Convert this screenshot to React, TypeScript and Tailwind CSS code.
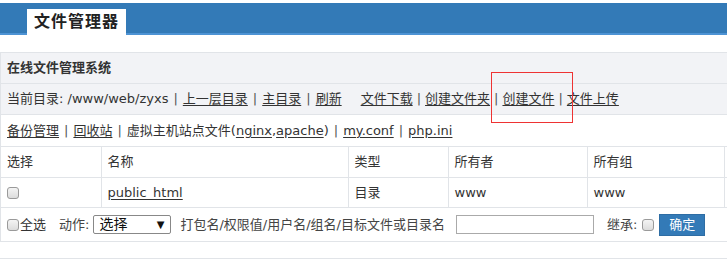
import React from 'react';

const font = { fontFamily: '"DejaVu Sans", "Noto Sans CJK SC", sans-serif' };

function Box({ className = '' }: { className?: string }) {
  return (
    <span
      className={`inline-block w-[12px] h-[12px] rounded-[3px] border border-[#9a9a9a] bg-gradient-to-b from-[#f4f4f4] to-[#dcdcdc] align-middle ${className}`}
    />
  );
}

function Sep({ tight = false }: { tight?: boolean }) {
  return <span className={`${tight ? 'mx-[4px]' : 'mx-[5px]'} text-[#555]`}>|</span>;
}

function Link({ children }: { children: React.ReactNode }) {
  return <a className="underline underline-offset-2 text-[#333] cursor-pointer">{children}</a>;
}

export default function App() {
  const cell = 'border border-[#e1e4e8] px-[6px] font-normal text-left';
  return (
    <div className="w-[727px] h-[259px] overflow-hidden bg-white text-[13px] text-[#333] relative" style={font}>
      <div className="pt-[3px]">
        <div className="h-[32px] bg-[#337ab7] border-b-2 border-[#4d93d4] flex items-end">
          <div className="ml-[27px] w-[99px] h-[26px] bg-white -mb-[2px] flex items-center justify-center font-bold text-[16px] tracking-[1px] text-[#222]">
            文件管理器
          </div>
        </div>
      </div>

      <div className="mt-[17px] w-[900px] border border-[#e1e4e8]">
        <div className="h-[31px] bg-[#f2f3f6] border-b border-[#e1e4e8] px-[6px] flex items-center font-bold">
          在线文件管理系统
        </div>
        <div className="h-[31px] bg-[#f2f3f6] border-b border-[#e1e4e8] px-[6px] flex items-center whitespace-nowrap">
          <span>当前目录: /www/web/zyxs</span>
          <Sep />
          <Link>上一层目录</Link>
          <Sep />
          <Link>主目录</Link>
          <Sep />
          <Link>刷新</Link>
          <span className="w-[19px]" />
          <Link>文件下载</Link>
          <Sep tight />
          <Link>创建文件夹</Link>
          <Sep tight />
          <Link>创建文件</Link>
          <Sep tight />
          <Link>文件上传</Link>
        </div>
        <div className="h-[32px] bg-white border-b border-[#e1e4e8] px-[6px] flex items-center whitespace-nowrap">
          <Link>备份管理</Link>
          <Sep />
          <Link>回收站</Link>
          <Sep />
          <span>
            虚拟主机站点文件(<Link>nginx</Link>,<Link>apache</Link>)
          </span>
          <Sep />
          <Link>my.conf</Link>
          <Sep />
          <Link>php.ini</Link>
        </div>
        <table className="border-collapse w-[900px] -mt-px">
          <colgroup>
            <col className="w-[100px]" />
            <col className="w-[247px]" />
            <col className="w-[100px]" />
            <col className="w-[139px]" />
            <col className="w-[137px]" />
            <col />
          </colgroup>
          <thead>
            <tr className="h-[31px]">
              <th className={`${cell} border-l-0`}>选择</th>
              <th className={cell}>名称</th>
              <th className={cell}>类型</th>
              <th className={cell}>所有者</th>
              <th className={cell}>所有组</th>
              <th className={`${cell} border-r-0`}></th>
            </tr>
          </thead>
          <tbody>
            <tr className="h-[30px]">
              <td className={`${cell} border-l-0`}>
                <Box />
              </td>
              <td className={cell}>
                <Link>public_html</Link>
              </td>
              <td className={cell}>目录</td>
              <td className={cell}>www</td>
              <td className={cell}>www</td>
              <td className={`${cell} border-r-0`}></td>
            </tr>
          </tbody>
        </table>
        <div className="h-[33px] px-[6px] flex items-center whitespace-nowrap">
          <Box />
          <span className="ml-[1px]">全选</span>
          <span className="ml-[13px] text-[#444]">动作:</span>
          <span className="ml-[4px] w-[78px] h-[19px] border border-[#888] rounded-[2px] flex items-center justify-between pl-[5px] pr-[6px] text-[14px] text-[#111]">
            选择<span className="text-[10px]">▼</span>
          </span>
          <span className="ml-[9px] text-[#444]">打包名/权限值/用户名/组名/目标文件或目录名</span>
          <span className="ml-[11px] w-[138px] h-[19px] border border-[#aaa] bg-white" />
          <span className="ml-[13px] text-[#444]">继承:</span>
          <Box className="ml-[5px]" />
          <button className="ml-[5px] w-[46px] h-[22px] bg-[#337ab7] border border-[#2e6da4] text-white text-[13px] leading-none">
            确定
          </button>
        </div>
      </div>
      <div className="mt-[16px] border-t border-[#e1e4e8]" />

      <div className="absolute left-[491px] top-[72px] w-[82px] h-[51px] border border-[#ee3333]" />
    </div>
  );
}
